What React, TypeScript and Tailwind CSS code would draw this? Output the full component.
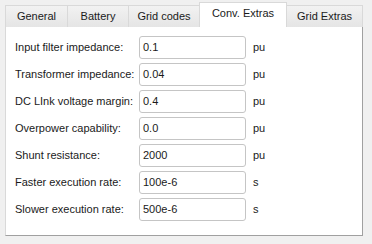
import React from "react";

const rows: [string, string, string][] = [
  ["Input filter impedance:", "0.1", "pu"],
  ["Transformer impedance:", "0.04", "pu"],
  ["DC LInk voltage margin:", "0.4", "pu"],
  ["Overpower capability:", "0.0", "pu"],
  ["Shunt resistance:", "2000", "pu"],
  ["Faster execution rate:", "100e-6", "s"],
  ["Slower execution rate:", "500e-6", "s"],
];

function Tab({ label, w }: { label: string; w: string }) {
  return (
    <div
      className={`${w} h-[22px] mt-[3px] flex items-center justify-center border border-[#d9d9d9] border-b-0 border-r-0 bg-gradient-to-b from-[#f2f2f2] to-[#e5e5e5] text-[11px] text-[#1a1a1a] whitespace-nowrap`}
    >
      {label}
    </div>
  );
}

export default function App() {
  return (
    <div
      className="w-[372px] h-[244px] bg-[#f0f0f0] pl-[5px] pt-[2px] overflow-hidden"
      style={{ fontFamily: "'Liberation Sans', Arial, sans-serif" }}
    >
      <div className="flex h-[25px] relative z-10">
        <Tab label="General" w="w-[62px]" />
        <Tab label="Battery" w="w-[61px]" />
        <Tab label="Grid codes" w="w-[71px]" />
        <div className="w-[88px] h-[25px] flex items-center justify-center border border-[#d9d9d9] border-b-0 bg-white text-[11px] text-[#1a1a1a] pb-[3px] whitespace-nowrap">
          Conv. Extras
        </div>
        <div className="w-[76px] h-[22px] mt-[3px] flex items-center justify-center border border-[#d9d9d9] border-b-0 border-l-0 bg-gradient-to-b from-[#f2f2f2] to-[#e5e5e5] text-[11px] text-[#1a1a1a] whitespace-nowrap">
          Grid Extras
        </div>
      </div>
      <div className="w-[358px] h-[210px] -mt-px border border-[#d9d9d9] border-b-[#a0a0a0] border-r-[#a0a0a0] bg-white pl-[9px] pt-[9px] flex flex-col gap-[4px]">
        {rows.map(([l, v, u]) => (
          <div key={l} className="flex items-center h-[23px]">
            <div className="w-[124px] text-[11px] text-[#1a1a1a] whitespace-nowrap">{l}</div>
            <div className="w-[107px] h-[23px] border border-[#c5c5c5] rounded-[3px] px-[3px] flex items-center text-[11px] text-[#1a1a1a]">
              {v}
            </div>
            <div className="ml-[7px] text-[11px] text-[#1a1a1a]">{u}</div>
          </div>
        ))}
      </div>
    </div>
  );
}
